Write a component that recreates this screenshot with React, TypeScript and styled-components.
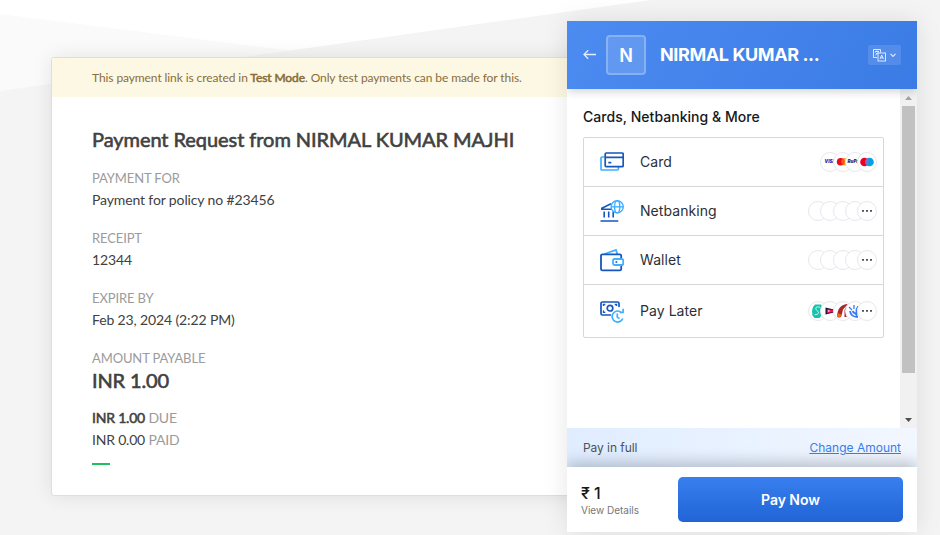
import React from "react";
import styled, { createGlobalStyle, css } from "styled-components";

const GlobalStyle = createGlobalStyle`
  * { box-sizing: border-box; }
  body { margin: 0; overflow: hidden; font-family: Lato, sans-serif; }
`;

const Page = styled.main`
  position: relative;
  width: 940px;
  height: 535px;
  padding: 57px 0 0 51px;
  overflow: hidden;
  background: #f4f4f4;
`;

const Backdrop = styled.svg`
  position: absolute;
  inset: 0;
`;

const Invoice = styled.section`
  position: relative;
  width: 800px;
  height: 439px;
  border: 1px solid #dddee0;
  border-radius: 3px;
  background: #fff;
  box-shadow: 0 0 20px rgba(0, 0, 0, 0.09);
  overflow: hidden;
  color: #414141;
`;

const TestBanner = styled.div`
  height: 39px;
  padding-left: 40px;
  line-height: 39px;
  font-size: 12px;
  letter-spacing: -0.09px;
  color: #8a6d3b;
  background: #fcf8e3;
`;

const Strong = styled.span`
  -webkit-text-stroke: 0.55px currentColor;
`;

const InvoiceBody = styled.div`
  padding: 29px 40px 0;
  font-size: 14px;
  letter-spacing: -0.13px;
`;

const Title = styled.h1`
  margin: 0;
  font-size: 20px;
  line-height: 26px;
  font-weight: 400;
  letter-spacing: -0.06px;
  white-space: nowrap;
  -webkit-text-stroke: 0.6px currentColor;
`;

const Field = styled.div`
  height: 60px;
`;

const Fields = styled.div`
  padding-top: 17px;
`;

const Label = styled.div`
  line-height: 18px;
  height: 19px;
  font-size: 13px;
  letter-spacing: -0.12px;
  color: #9b9b9b;
`;

const Value = styled.div`
  line-height: 24px;
`;

const Amount = styled.div`
  font-size: 20px;
  line-height: 24px;
  -webkit-text-stroke: 0.6px currentColor;
`;

const Balance = styled.div`
  line-height: 22px;
  letter-spacing: -0.2px;
`;

const Balances = styled.div`
  padding-top: 15px;
`;

const Muted = styled.span`
  color: #9b9b9b;
`;

const Accent = styled.div`
  width: 18px;
  height: 2px;
  margin-top: 12px;
  background: #1fbf5f;
`;

const Checkout = styled.aside`
  position: absolute;
  left: 567px;
  top: 21px;
  width: 350px;
  height: 511px;
  display: flex;
  flex-direction: column;
  background: #fff;
  box-shadow: 0 0 24px rgba(0, 0, 0, 0.1);
  font-family: Inter, sans-serif;
`;

const Header = styled.header`
  position: relative;
  z-index: 1;
  flex: 0 0 68px;
  display: flex;
  align-items: center;
  padding: 0 16px;
  color: #fff;
  background: linear-gradient(120deg, #4c8bf0, #3b7be5);
  box-shadow: 0 4px 8px -1px rgba(23, 31, 37, 0.18);
  clip-path: inset(0 0 -16px 0);
`;

const Initial = styled.div`
  width: 40px;
  height: 40px;
  margin-left: 9px;
  display: grid;
  place-items: center;
  border: 2px solid rgba(255, 255, 255, 0.35);
  background-clip: padding-box;
  border-radius: 4px;
  background-color: rgba(255, 255, 255, 0.14);
  font-size: 18px;
  font-weight: 600;
`;

const Merchant = styled.div`
  margin-left: 14px;
  padding-bottom: 2px;
  flex: 1;
  font-size: 18px;
  font-weight: 700;
  letter-spacing: -0.4px;
  white-space: nowrap;
`;

const Language = styled.button`
  width: 33px;
  height: 20px;
  padding: 0 4px;
  display: flex;
  align-items: center;
  justify-content: space-between;
  border: 0;
  border-radius: 2px;
  color: #dbe8fd;
  background: rgba(255, 255, 255, 0.12);
`;

const Scroller = styled.div`
  flex: 0 0 339px;
  display: flex;
`;

const Methods = styled.div`
  width: 333px;
  padding: 18px 16px 0;
`;

const MethodsTitle = styled.h2`
  margin: 0 0 10px;
  height: 20px;
  line-height: 20px;
  font-size: 14px;
  font-weight: 500;
  letter-spacing: 0.04px;
  color: #15181b;
`;

const MethodList = styled.div`
  border: 1px solid #d8d8da;
  border-radius: 2px;
`;

const Method = styled.div<{ $tall?: boolean }>`
  height: ${(p) => (p.$tall ? "52px" : "49px")};
  padding: 0 6px 0 16px;
  display: flex;
  align-items: center;
  font-size: 14px;
  color: #2c3036;
  ${(p) => !p.$tall && css`border-bottom: 1px solid #d8d8da;`}
`;

const MethodName = styled.span`
  flex: 1;
  margin-left: 16px;
  padding-bottom: 2px;
  letter-spacing: 0.06px;
`;

const Badges = styled.div`
  display: flex;
`;

const Badge = styled.div<{ $color?: string }>`
  width: 20px;
  height: 20px;
  margin-left: -7.75px;
  display: grid;
  place-items: center;
  border: 1px solid #e7e8ee;
  border-radius: 50%;
  background: #fff;
  color: ${(p) => p.$color ?? "#25282c"};
`;

const CardBrand = styled.span`
  font-size: 4.5px;
  font-weight: 900;
  font-style: italic;
  line-height: 1;
`;

const ScrollTrack = styled.div`
  width: 17px;
  display: flex;
  flex-direction: column;
  align-items: center;
  background: #f1f1f1;
`;

const Thumb = styled.div`
  width: 13px;
  height: 267px;
  background: #c1c1c1;
`;

const ArrowCell = styled.div`
  height: 17px;
  display: grid;
  place-items: center;
`;

const ArrowCellEnd = styled(ArrowCell)`
  margin-top: auto;
`;

const AmountStrip = styled.div`
  flex: 0 0 39px;
  display: flex;
  align-items: center;
  justify-content: space-between;
  padding: 0 16px;
  font-size: 12px;
  color: #4c535c;
  background: linear-gradient(90deg, #e0edff, #f2f7ff);
`;

const StripLabel = styled.span`
  letter-spacing: -0.06px;
`;

const ChangeLink = styled.a`
  color: #3a7ee8;
  text-decoration: underline;
`;

const Footer = styled.footer`
  flex: 1;
  display: flex;
  justify-content: space-between;
  padding: 10px 14px;
  background: #fff;
  box-shadow: 0 -4px 14px rgba(23, 31, 37, 0.26);
  clip-path: inset(-20px 0 0 0);
`;

const Total = styled.div`
  padding-top: 7px;
  font-size: 16px;
  line-height: 19px;
  font-weight: 500;
  color: #15181b;
`;

const Details = styled.div`
  font-size: 10px;
  line-height: 15px;
  font-weight: 400;
  color: #74777b;
`;

const PayButton = styled.button`
  width: 225px;
  height: 45px;
  padding: 0;
  border: 0;
  border-radius: 5px;
  font: 600 14px Inter, sans-serif;
  letter-spacing: -0.04px;
  color: #fff;
  background: linear-gradient(180deg, #397fef, #2064d6);
`;

const DARK = "#1757bd";
const LIGHT = "#3fb0ff";

const CardIcon = () => (
  <svg width="24" height="24" fill="none" strokeWidth="1.7">
    <path d="M4.5 7H2a1 1 0 0 0-1 1v11a1 1 0 0 0 1 1h15a1.5 1.5 0 0 0 1.5-1.5V17" stroke={LIGHT} />
    <rect x="5.2" y="3" width="18" height="13.6" rx="1" stroke={DARK} />
    <path d="M5 7.4h18M8.3 12.7h3" stroke={DARK} />
  </svg>
);

const BankIcon = () => (
  <svg width="24" height="24" fill="none" strokeWidth="1.6">
    <path d="M11 4.8 1.8 9.2v1H12M4.2 12.5v6M8.7 12.5v6M13.2 12.5v6M.5 22h17.8" stroke={DARK} />
    <g stroke={LIGHT} strokeWidth="1.4">
      <circle cx="17.2" cy="7.8" r="6.1" />
      <ellipse cx="17.2" cy="7.8" rx="2.6" ry="6.1" />
      <path d="M11.2 7.8h12" />
    </g>
  </svg>
);

const WalletIcon = () => (
  <svg width="24" height="24" fill="none" strokeWidth="1.8">
    <path d="M4.5 6 16 2l1.3 4" stroke={LIGHT} />
    <rect x="1" y="6.3" width="20.2" height="16" rx="1.4" stroke={DARK} />
    <path d="M21.2 11.2v6.6" stroke="#fff" strokeWidth="3" />
    <rect x="13" y="11" width="10.2" height="6" rx="1.5" fill="#fff" stroke={LIGHT} />
    <path d="M15.5 14h1.8" stroke={DARK} strokeWidth="1.6" />
  </svg>
);

const LaterIcon = () => (
  <svg width="24" height="24" fill="none" strokeWidth="1.7">
    <path d="M19 8V4.5A1.5 1.5 0 0 0 17.5 3h-15A1.5 1.5 0 0 0 1 4.5v10A1.5 1.5 0 0 0 2.5 16H11" stroke={DARK} />
    <circle cx="10" cy="9.2" r="2.8" stroke={DARK} />
    <path d="M3.5 7V5.5h1.8M16.5 7V5.5h-1.8M3.5 11.6v1.8h1.8" stroke={DARK} strokeWidth="1.4" />
    <path d="M22.8 19.5A5.5 5.5 0 1 1 20.5 12.8M19.5 13.4h3.6V9.8M17.3 14.5v3.6l2.2 1.5" stroke={LIGHT} />
  </svg>
);

const DotsBadge = () => (
  <Badge>
    <svg width="12" height="4" fill="currentColor">
      <rect x="1" y="1.2" width="2" height="1.4" />
      <rect x="5" y="1.2" width="2" height="1.4" />
      <rect x="9" y="1.2" width="2" height="1.4" />
    </svg>
  </Badge>
);

const EmptyBadges = () => (
  <Badges>
    <Badge /><Badge /><Badge /><Badge /><DotsBadge />
  </Badges>
);

const CardBadges = () => (
  <Badges>
    <Badge $color="#2334b5"><CardBrand>VISA</CardBrand></Badge>
    <Badge>
      <svg width="14" height="10">
        <circle cx="9" cy="4.8" r="3.8" fill="#f79e1b" />
        <circle cx="4.6" cy="4.8" r="3.8" fill="#eb0d1e" />
        <path d="M6.8 1.7a3.8 3.8 0 0 1 0 6.2a3.8 3.8 0 0 1 0-6.2" fill="#ff5a12" />
      </svg>
    </Badge>
    <Badge $color="#1d2570"><CardBrand>RuPay</CardBrand></Badge>
    <Badge>
      <svg width="16" height="10">
        <circle cx="5.5" cy="5" r="4.3" fill="#eb0020" />
        <circle cx="10.5" cy="5" r="4.3" fill="#00a2e5" />
        <path d="M8 1.5a4.3 4.3 0 0 1 0 7a4.3 4.3 0 0 1 0-7" fill="#7375cf" />
      </svg>
    </Badge>
  </Badges>
);

const LaterBadges = () => (
  <Badges>
    <Badge>
      <svg width="14" height="16" fill="none">
        <path d="M4 1.5h6l1.5 2.5-1 8.5L8.5 15h-5l-2-2.5L1 8l1-4z" fill="#13c3ac" />
        <path d="M9 4.2C5 3 3.500 5.500 6 7.500s2 4-2.300 4.200" stroke="#fff" strokeWidth="0.8" />
      </svg>
    </Badge>
    <Badge>
      <svg width="12" height="10">
        <path d="M1.5 1.5 10 3.5v3l-8.5 2z" fill="#2a123f" />
        <path d="M3 3.3 9.8 4v2L3 7z" fill="#ef174c" />
        <path d="M4 4.3 6.5 5 4 5.8z" fill="#fff" />
      </svg>
    </Badge>
    <Badge>
      <svg width="16" height="16">
        <path d="M13 1C6 1 2 6 2.3 14c2 1 4 .5 4.400-2L8 6.500z" fill="#a52a2a" />
        <path d="M2.3 10 6.5 11.500C6 14 4 15 2.300 14z" fill="#f26522" />
        <path d="M11 4h2v1.500h-1.500V14H9.500V7z" fill="#a52a2a" />
      </svg>
    </Badge>
    <Badge>
      <svg width="14" height="16" fill="none" stroke="#3779ef">
        <path d="m1 4 3 3m2-5v4m4-3-2 4" strokeWidth="1.3" />
        <path d="M2 8c.5 4 3 6 8 6M4.500 8c1 2 3 3 5 3M8.500 7v7" strokeWidth="1.8" />
      </svg>
    </Badge>
    <DotsBadge />
  </Badges>
);

const fields = [
  { label: "PAYMENT FOR", value: "Payment for policy no #23456" },
  { label: "RECEIPT", value: "12344" },
  { label: "EXPIRE BY", value: "Feb 23, 2024 (2:22 PM)" },
];

const methods = [
  { name: "Card", icon: <CardIcon />, badges: <CardBadges /> },
  { name: "Netbanking", icon: <BankIcon />, badges: <EmptyBadges /> },
  { name: "Wallet", icon: <WalletIcon />, badges: <EmptyBadges /> },
  { name: "Pay Later", icon: <LaterIcon />, badges: <LaterBadges />, tall: true },
];

export default function App() {
  return (
    <Page>
      <GlobalStyle />
      <Backdrop width="940" height="535">
        <path d="M0 0H650L0 91Z" fill="#fafafa" />
        <path d="M0 0H650L290 50.4L0 14Z" fill="#fff" />
      </Backdrop>
      <Invoice>
        <TestBanner>
          This payment link is created in <Strong>Test Mode</Strong>. Only test payments can be made for this.
        </TestBanner>
        <InvoiceBody>
          <Title>Payment Request from NIRMAL KUMAR MAJHI</Title>
          <Fields>
            {fields.map((f) => (
              <Field key={f.label}>
                <Label>{f.label}</Label>
                <Value>{f.value}</Value>
              </Field>
            ))}
          </Fields>
          <Label>AMOUNT PAYABLE</Label>
          <Amount>INR 1.00</Amount>
          <Balances>
            <Balance><Strong>INR 1.00</Strong> <Muted>DUE</Muted></Balance>
            <Balance>INR 0.00 <Muted>PAID</Muted></Balance>
          </Balances>
          <Accent />
        </InvoiceBody>
      </Invoice>
      <Checkout>
        <Header>
          <svg width="14" height="12" fill="none" stroke="#e2edff" strokeWidth="1.3">
            <path d="M13 5.5H1M5.2 1.3 1 5.5l4.2 4.2" />
          </svg>
          <Initial>N</Initial>
          <Merchant>NIRMAL KUMAR ...</Merchant>
          <Language>
            <svg width="15" height="14" fill="none" stroke="currentColor">
              <path d="M5 9.5H1.5v-8h7v3M3 3.5h4M5 2.5v1M3.5 7c1.5-.5 2.5-2 3-3.5M3.500 4.500 5 6" />
              <rect x="6" y="5" width="7.5" height="8" />
              <path d="m8 11 1.7-4 1.8 4M8.5 9.8h2.5" />
            </svg>
            <svg width="8" height="6" fill="none" stroke="currentColor" strokeWidth="1.2">
              <path d="m1.5 1.8 2.5 2.5 2.5-2.5" />
            </svg>
          </Language>
        </Header>
        <Scroller>
          <Methods>
            <MethodsTitle>Cards, Netbanking &amp; More</MethodsTitle>
            <MethodList>
              {methods.map((m) => (
                <Method key={m.name} $tall={m.tall}>
                  {m.icon}
                  <MethodName>{m.name}</MethodName>
                  {m.badges}
                </Method>
              ))}
            </MethodList>
          </Methods>
          <ScrollTrack>
            <ArrowCell>
              <svg width="7" height="4"><path d="M0 4 3.5 0 7 4z" fill="#a3a3a3" /></svg>
            </ArrowCell>
            <Thumb />
            <ArrowCellEnd>
              <svg width="7" height="4"><path d="M0 0h7L3.5 4z" fill="#505050" /></svg>
            </ArrowCellEnd>
          </ScrollTrack>
        </Scroller>
        <AmountStrip>
          <StripLabel>Pay in full</StripLabel>
          <ChangeLink>Change Amount</ChangeLink>
        </AmountStrip>
        <Footer>
          <Total>
            ₹ 1
            <Details>View Details</Details>
          </Total>
          <PayButton>Pay Now</PayButton>
        </Footer>
      </Checkout>
    </Page>
  );
}
